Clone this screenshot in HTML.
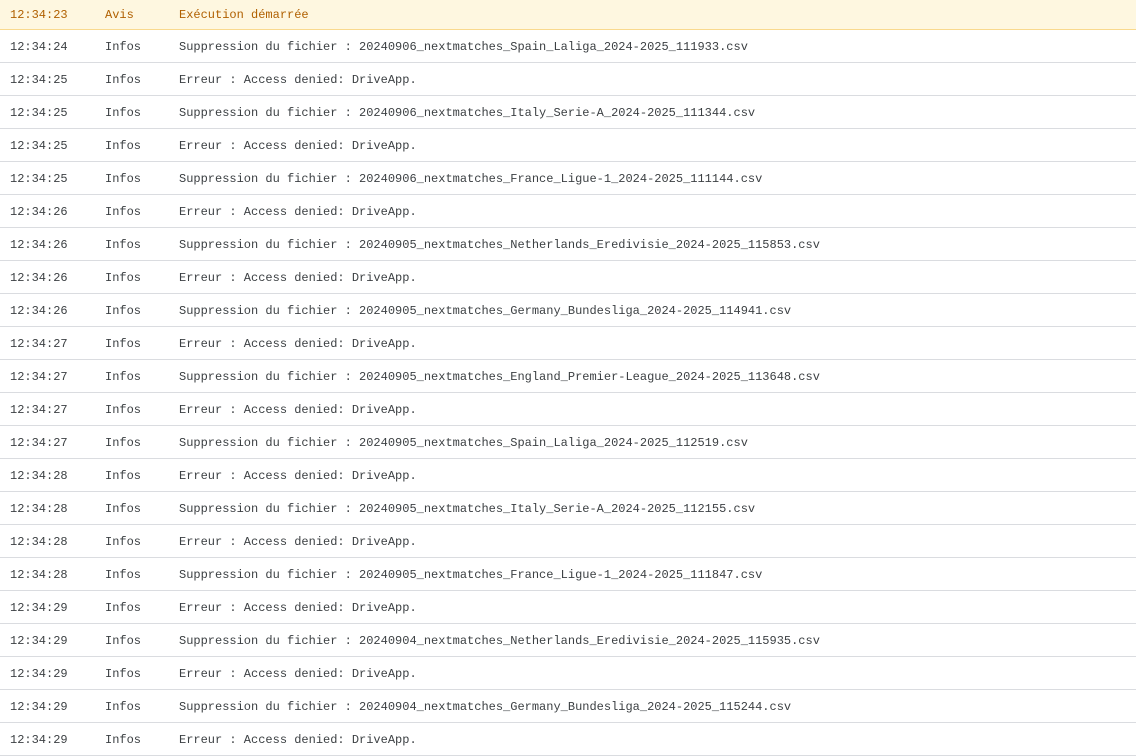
<!DOCTYPE html>
<html><head><meta charset="utf-8"><style>
body{margin:0;background:#fff;font-family:"Liberation Mono",monospace;font-size:12px;color:#3c4043;overflow:hidden;width:1136px;height:745px}
.r{height:30px;padding-top:2px;border-bottom:1px solid #dadce0;display:flex;align-items:center;white-space:pre}
.r span{display:inline-block}
.t{width:95px;padding-left:10px}
.l{width:74px}
.w{height:29px;padding-top:0;background:#fef7e0;color:#b06000;border-bottom:1px solid #f9d98d}
</style></head><body>
<div class="r w"><span class="t">12:34:23</span><span class="l">Avis</span><span>Exécution démarrée</span></div>
<div class="r"><span class="t">12:34:24</span><span class="l">Infos</span><span>Suppression du fichier : 20240906_nextmatches_Spain_Laliga_2024-2025_111933.csv</span></div>
<div class="r"><span class="t">12:34:25</span><span class="l">Infos</span><span>Erreur : Access denied: DriveApp.</span></div>
<div class="r"><span class="t">12:34:25</span><span class="l">Infos</span><span>Suppression du fichier : 20240906_nextmatches_Italy_Serie-A_2024-2025_111344.csv</span></div>
<div class="r"><span class="t">12:34:25</span><span class="l">Infos</span><span>Erreur : Access denied: DriveApp.</span></div>
<div class="r"><span class="t">12:34:25</span><span class="l">Infos</span><span>Suppression du fichier : 20240906_nextmatches_France_Ligue-1_2024-2025_111144.csv</span></div>
<div class="r"><span class="t">12:34:26</span><span class="l">Infos</span><span>Erreur : Access denied: DriveApp.</span></div>
<div class="r"><span class="t">12:34:26</span><span class="l">Infos</span><span>Suppression du fichier : 20240905_nextmatches_Netherlands_Eredivisie_2024-2025_115853.csv</span></div>
<div class="r"><span class="t">12:34:26</span><span class="l">Infos</span><span>Erreur : Access denied: DriveApp.</span></div>
<div class="r"><span class="t">12:34:26</span><span class="l">Infos</span><span>Suppression du fichier : 20240905_nextmatches_Germany_Bundesliga_2024-2025_114941.csv</span></div>
<div class="r"><span class="t">12:34:27</span><span class="l">Infos</span><span>Erreur : Access denied: DriveApp.</span></div>
<div class="r"><span class="t">12:34:27</span><span class="l">Infos</span><span>Suppression du fichier : 20240905_nextmatches_England_Premier-League_2024-2025_113648.csv</span></div>
<div class="r"><span class="t">12:34:27</span><span class="l">Infos</span><span>Erreur : Access denied: DriveApp.</span></div>
<div class="r"><span class="t">12:34:27</span><span class="l">Infos</span><span>Suppression du fichier : 20240905_nextmatches_Spain_Laliga_2024-2025_112519.csv</span></div>
<div class="r"><span class="t">12:34:28</span><span class="l">Infos</span><span>Erreur : Access denied: DriveApp.</span></div>
<div class="r"><span class="t">12:34:28</span><span class="l">Infos</span><span>Suppression du fichier : 20240905_nextmatches_Italy_Serie-A_2024-2025_112155.csv</span></div>
<div class="r"><span class="t">12:34:28</span><span class="l">Infos</span><span>Erreur : Access denied: DriveApp.</span></div>
<div class="r"><span class="t">12:34:28</span><span class="l">Infos</span><span>Suppression du fichier : 20240905_nextmatches_France_Ligue-1_2024-2025_111847.csv</span></div>
<div class="r"><span class="t">12:34:29</span><span class="l">Infos</span><span>Erreur : Access denied: DriveApp.</span></div>
<div class="r"><span class="t">12:34:29</span><span class="l">Infos</span><span>Suppression du fichier : 20240904_nextmatches_Netherlands_Eredivisie_2024-2025_115935.csv</span></div>
<div class="r"><span class="t">12:34:29</span><span class="l">Infos</span><span>Erreur : Access denied: DriveApp.</span></div>
<div class="r"><span class="t">12:34:29</span><span class="l">Infos</span><span>Suppression du fichier : 20240904_nextmatches_Germany_Bundesliga_2024-2025_115244.csv</span></div>
<div class="r"><span class="t">12:34:29</span><span class="l">Infos</span><span>Erreur : Access denied: DriveApp.</span></div>
</body></html>
